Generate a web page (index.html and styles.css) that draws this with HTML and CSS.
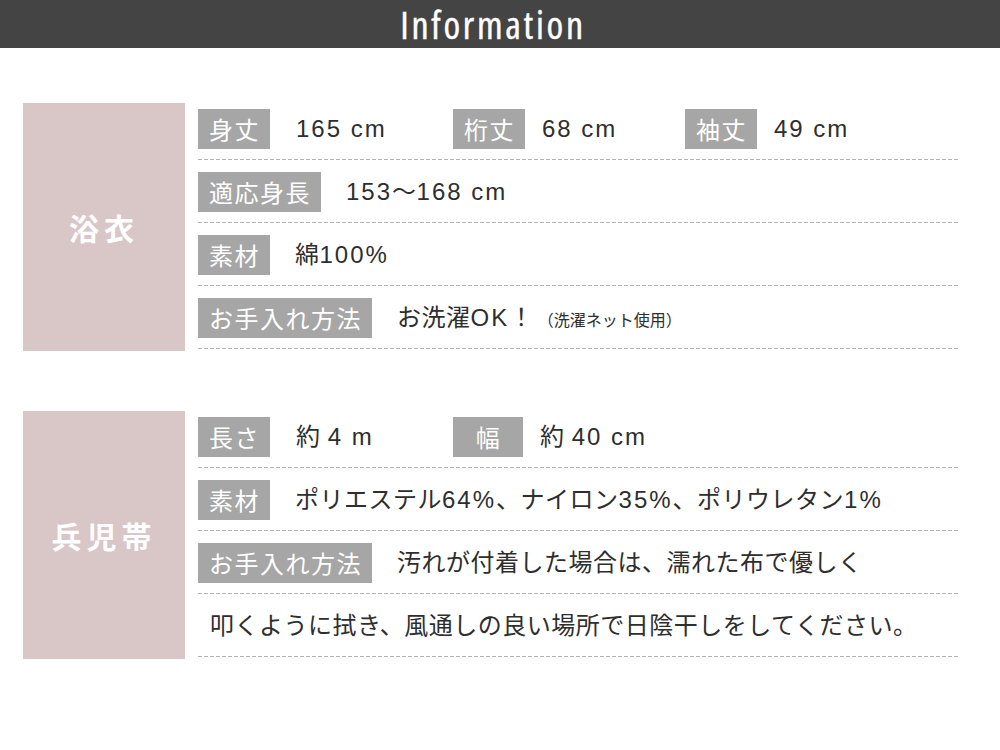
FILE: index.html
```html
<!DOCTYPE html>
<html lang="ja">
<head>
<meta charset="utf-8">
<title>Information</title>
<link rel="stylesheet" href="styles.css">
</head>
<body>
<header class="top">
  <h1 class="top__title">Information</h1>
</header>
<main class="sheet">
  <section class="spec">
    <div class="cat"><span class="cat__name">浴衣</span></div>
    <div class="rows">
      <div class="row">
        <div class="item item--a"><span class="tag">身丈</span><span class="val"><span class="num">165 cm</span></span></div>
        <div class="item item--b"><span class="tag">桁丈</span><span class="val"><span class="num">68 cm</span></span></div>
        <div class="item item--c"><span class="tag">袖丈</span><span class="val"><span class="num">49 cm</span></span></div>
      </div>
      <div class="row">
        <span class="tag">適応身長</span><span class="val"><span class="num">153</span>〜<span class="num">168 cm</span></span>
      </div>
      <div class="row">
        <span class="tag">素材</span><span class="val">綿<span class="num">100%</span></span>
      </div>
      <div class="row">
        <span class="tag">お手入れ方法</span><span class="val">お洗濯<span class="num">OK</span>！</span><span class="note">（洗濯ネット使用）</span>
      </div>
    </div>
  </section>
  <section class="spec">
    <div class="cat"><span class="cat__name">兵児帯</span></div>
    <div class="rows">
      <div class="row">
        <div class="item item--a"><span class="tag">長さ</span><span class="val">約 <span class="num">4 m</span></span></div>
        <div class="item item--b"><span class="tag">幅</span><span class="val">約 <span class="num">40 cm</span></span></div>
      </div>
      <div class="row">
        <span class="tag">素材</span><span class="val">ポリエステル<span class="num">64%</span>、ナイロン<span class="num">35%</span>、ポリウレタン<span class="num">1%</span></span>
      </div>
      <div class="row">
        <span class="tag">お手入れ方法</span><span class="val">汚れが付着した場合は、濡れた布で優しく</span>
      </div>
      <div class="row row--plain">
        <span class="val val--plain">叩くように拭き、風通しの良い場所で日陰干しをしてください。</span>
      </div>
    </div>
  </section>
</main>
</body>
</html>
```
FILE: styles.css
```css
html, body {
  margin: 0;
  padding: 0;
  background: #fff;
}

body {
  font-family: "Liberation Sans", "Noto Sans CJK JP", sans-serif;
  color: #2e2e2e;
}

.top {
  height: 48px;
  background: #444444;
  display: flex;
  align-items: center;
  justify-content: center;
}

.top__title {
  margin: 0;
  padding: 0 14px 0 0;
  font-family: "Open Sans", "Liberation Sans", sans-serif;
  font-weight: 400;
  font-size: 38px;
  font-stretch: 75%;
  line-height: 46px;
  color: #ffffff;
  letter-spacing: 2.7px;
  -webkit-text-stroke: 0.4px #ffffff;
}

.sheet {
  padding: 49px 41px 0 23px;
}

.spec {
  display: flex;
  align-items: flex-start;
  gap: 13px;
}

.spec + .spec {
  margin-top: 54px;
}

.cat {
  width: 162px;
  height: 248px;
  margin-top: 6px;
  background: #d9c6c7;
  display: flex;
  align-items: center;
  justify-content: center;
}

.cat__name {
  font-family: "Noto Sans CJK JP", sans-serif;
  font-weight: 700;
  font-size: 30px;
  letter-spacing: 5px;
  color: #ffffff;
}

.rows {
  width: 761px;
}

.row {
  display: flex;
  align-items: center;
  height: 40px;
  padding: 12px 0 11px;
  background-image: linear-gradient(to right, #b2b2b2 0, #b2b2b2 4px, transparent 4px, transparent 6px);
  background-size: 6px 1px;
  background-repeat: repeat-x;
  background-position: left bottom;
}

.row--plain {
  padding-left: 12px;
}

.item {
  display: flex;
  align-items: center;
}

.item--a {
  width: 255px;
}

.item--b {
  width: 232px;
}

.tag {
  box-sizing: border-box;
  min-width: 70px;
  height: 40px;
  padding: 0 10px 0 11px;
  background: #a6a6a6;
  color: #ffffff;
  font-family: "Noto Sans CJK JP", sans-serif;
  font-size: 24px;
  line-height: 40px;
  letter-spacing: 1.5px;
  text-align: center;
  white-space: nowrap;
}

.val {
  margin-left: 25px;
  font-size: 24px;
  line-height: 40px;
  letter-spacing: 0.5px;
  white-space: nowrap;
}

.item--a .val {
  margin-left: 26px;
}

.item--b .val,
.item--c .val {
  margin-left: 17px;
}

.val--plain {
  margin-left: 0;
}

.num {
  letter-spacing: 2px;
}

.note {
  margin-left: 4px;
  font-family: "Noto Sans CJK JP", sans-serif;
  font-size: 16px;
  line-height: 40px;
  padding-top: 2px;
  white-space: nowrap;
}
```
